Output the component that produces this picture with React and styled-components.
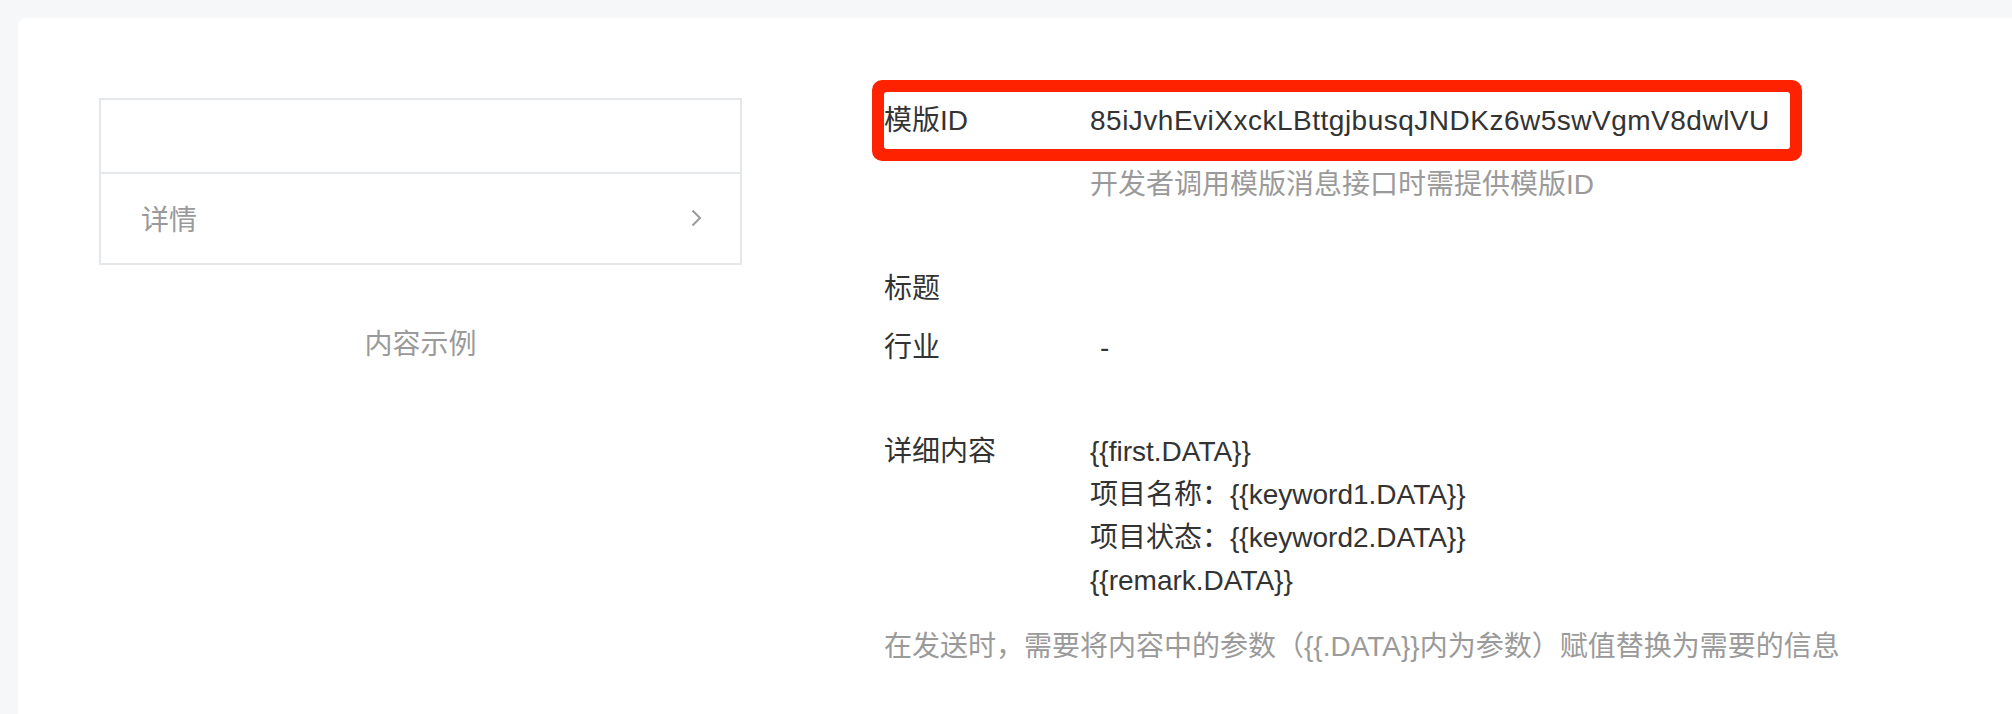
import React from "react";
import styled, { createGlobalStyle } from "styled-components";

const GlobalStyle = createGlobalStyle`
  html, body {
    margin: 0;
    padding: 0;
    background: #f6f7f9;
    overflow: hidden;
  }
  body {
    font-family: "Liberation Sans", "Noto Sans CJK SC", sans-serif;
    -webkit-font-smoothing: antialiased;
  }
`;

const Page = styled.div`
  padding: 18px 0 0 18px;
  height: 100vh;
  box-sizing: border-box;
`;

const Card = styled.div`
  background: #fff;
  border-radius: 8px 0 0 0;
  height: 100%;
  display: flex;
  align-items: flex-start;
  gap: 142px;
  padding: 0 0 0 81px;
`;

//left preview
const Preview = styled.div`
  width: 643px;
  padding-top: 80px;
  display: flex;
  flex-direction: column;
  align-items: center;
`;

const PreviewBox = styled.div`
  width: 100%;
  box-sizing: border-box;
  border: 2px solid #e4e8eb;
`;

const PreviewHead = styled.div`
  height: 72px;
  border-bottom: 2px solid #e4e8eb;
`;

const PreviewRow = styled.div`
  height: 89px;
  box-sizing: border-box;
  padding: 0 38px 2px 40px;
  display: flex;
  align-items: center;
  justify-content: space-between;
  font-size: 28px;
  color: #9a9a9a;
`;

const Caption = styled.div`
  margin-top: 66px;
  font-size: 28px;
  line-height: 28px;
  color: #9a9a9a;
`;

//right info
const Info = styled.div`
  padding-top: 74px;
  display: flex;
  flex-direction: column;
  font-size: 28px;
  line-height: 43px;
  color: #333;
`;

const Field = styled.div`
  display: grid;
  grid-template-columns: 206px auto;
  margin-top: ${(p) => p.$gap || 0}px;
`;

const Highlight = styled(Field)`
  width: 906px;
  height: 57px;
  align-items: center;
  border-radius: 3px;
  box-shadow: 0 0 0 12px #ff2200;
`;

const Label = styled.div``;

const Value = styled.div`
  display: flex;
  flex-direction: column;
  padding-left: ${(p) => p.$indent || 0}px;
  letter-spacing: ${(p) => (p.$wide ? "0.5px" : "normal")};
`;

const Hint = styled.div`
  color: #9a9a9a;
  margin-top: ${(p) => p.$gap || 0}px;
  padding-left: ${(p) => p.$indent || 0}px;
`;

const Chevron = () => (
  <svg width="11" height="18" viewBox="0 0 11 18" fill="none">
    <path d="M1.5 1.5L9 9L1.5 16.5" stroke="#9a9a9a" strokeWidth="2" />
  </svg>
);

function App() {
  return (
    <Page>
      <GlobalStyle />
      <Card>
        <Preview>
          <PreviewBox>
            <PreviewHead />
            <PreviewRow>
              <span>详情</span>
              <Chevron />
            </PreviewRow>
          </PreviewBox>
          <Caption>内容示例</Caption>
        </Preview>

        <Info>
          <Highlight>
            <Label>模版ID</Label>
            <Value $wide>85iJvhEviXxckLBttgjbusqJNDKz6w5swVgmV8dwlVU</Value>
          </Highlight>
          <Hint $gap={14} $indent={206}>
            开发者调用模版消息接口时需提供模版ID
          </Hint>
          <Field $gap={61}>
            <Label>标题</Label>
            <Value />
          </Field>
          <Field $gap={16}>
            <Label>行业</Label>
            <Value $indent={10}>-</Value>
          </Field>
          <Field $gap={61}>
            <Label>详细内容</Label>
            <Value>
              <span>{"{{first.DATA}}"}</span>
              <span>项目名称：{"{{keyword1.DATA}}"}</span>
              <span>项目状态：{"{{keyword2.DATA}}"}</span>
              <span>{"{{remark.DATA}}"}</span>
            </Value>
          </Field>
          <Hint $gap={23}>
            在发送时，需要将内容中的参数（{"{{.DATA}}"}内为参数）赋值替换为需要的信息
          </Hint>
        </Info>
      </Card>
    </Page>
  );
}

export default App;
